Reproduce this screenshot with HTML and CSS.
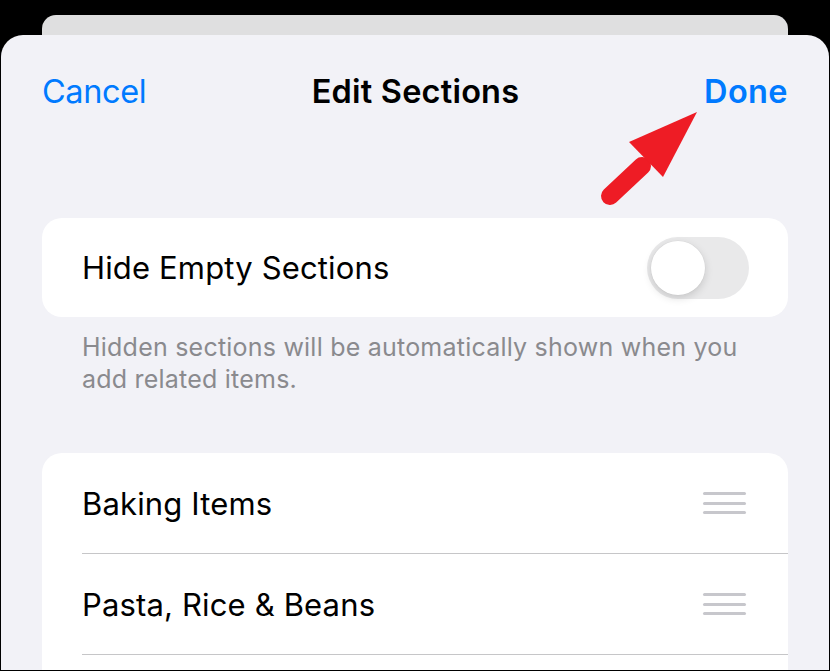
FILE: index.html
```html
<!DOCTYPE html>
<html>
<head>
<meta charset="utf-8">
<link rel="stylesheet" href="styles.css">
</head>
<body>
<div class="screen">
  <div class="back-card"></div>
  <div class="sheet">
    <header class="nav">
      <span class="nav-btn">Cancel</span>
      <span class="nav-title">Edit Sections</span>
      <span class="nav-btn nav-done">Done</span>
      <svg class="arrow" width="120" height="110" viewBox="0 0 120 110">
        <line x1="18" y1="95" x2="50" y2="65" stroke="#ee1c25" stroke-width="18" stroke-linecap="round"/>
        <polygon points="105,11 37,41 71,76" fill="#ee1c25"/>
      </svg>
    </header>
    <div class="content">
      <section class="card">
        <div class="row toggle-row">
          <span class="label">Hide Empty Sections</span>
          <span class="switch"><span class="knob"></span></span>
        </div>
      </section>
      <p class="footnote">Hidden sections will be automatically shown when you add related items.</p>
      <section class="card list">
        <div class="row list-row">
          <span class="label">Baking Items</span>
          <span class="grip"><i></i><i></i><i></i></span>
        </div>
        <div class="row list-row">
          <span class="label">Pasta, Rice &amp; Beans</span>
          <span class="grip"><i></i><i></i><i></i></span>
        </div>
        <div class="row list-row"></div>
      </section>
    </div>
  </div>
</div>
</body>
</html>
```

FILE: styles.css
```css
* { box-sizing: border-box; }
html, body { margin: 0; padding: 0; background: #000; }
body { font-family: Inter, "Open Sans", "Liberation Sans", sans-serif; }
.screen {
  width: 830px;
  height: 671px;
  overflow: hidden;
  background: #000;
  padding-top: 15px;
}
.back-card {
  margin: 0 42px;
  height: 20px;
  background: #dfdfe0;
  border-radius: 14px 14px 0 0;
}
.sheet {
  margin: 0 1px;
  height: 635px;
  background: #f2f2f7;
  border-radius: 22px 22px 0 0;
  overflow: hidden;
}
.nav {
  position: relative;
  height: 112px;
  display: flex;
  align-items: center;
  justify-content: space-between;
  padding: 0 41px 0 41px;
}
.nav-btn {
  font-size: 32.5px;
  color: #007aff;
  letter-spacing: -0.4px;
}
.nav-done { font-weight: 600; letter-spacing: 0.4px; }
.nav-title {
  position: absolute;
  left: 0;
  right: 0;
  text-align: center;
  font-size: 32.5px;
  font-weight: 600;
  color: #000;
  letter-spacing: 0.2px;
  padding-left: 1px;
  pointer-events: none;
}
.arrow {
  position: absolute;
  left: 591px;
  top: 66px;
}
.content {
  padding: 71px 41px 0;
}
.card {
  background: #fff;
  border-radius: 20px;
  overflow: hidden;
}
.row {
  display: flex;
  align-items: center;
  justify-content: space-between;
  padding-left: 40px;
}
.label {
  font-size: 31px;
  color: #000;
  letter-spacing: 0.15px;
}
.toggle-row {
  height: 99px;
  padding-right: 39px;
}
.switch {
  width: 102px;
  height: 62px;
  border-radius: 31px;
  background: #e9e9ea;
  padding: 4px;
  display: flex;
}
.knob {
  width: 54px;
  height: 54px;
  border-radius: 50%;
  background: #fff;
  box-shadow: 0 3px 8px rgba(0,0,0,0.15), 0 0 0 0.5px rgba(0,0,0,0.04);
}
.footnote {
  margin: 14px 0 0;
  padding: 0 40px;
  font-size: 25px;
  line-height: 32px;
  color: #8a8a8e;
  letter-spacing: 0.22px;
}
.list { margin-top: 58px; }
.list-row {
  padding-right: 0;
  position: relative;
}
.list-row + .list-row::before {
  content: "";
  position: absolute;
  top: 0;
  left: 40px;
  right: 0;
  height: 1px;
  background: #c6c6c8;
}
.list-row { height: 100px; }
.list-row + .list-row { height: 101px; padding-top: 1px; }
.grip {
  width: 43px;
  margin-right: 42px;
  display: flex;
  flex-direction: column;
  gap: 6.5px;
}
.grip i {
  display: block;
  height: 3px;
  border-radius: 1.5px;
  background: #c7c7cc;
}
```
